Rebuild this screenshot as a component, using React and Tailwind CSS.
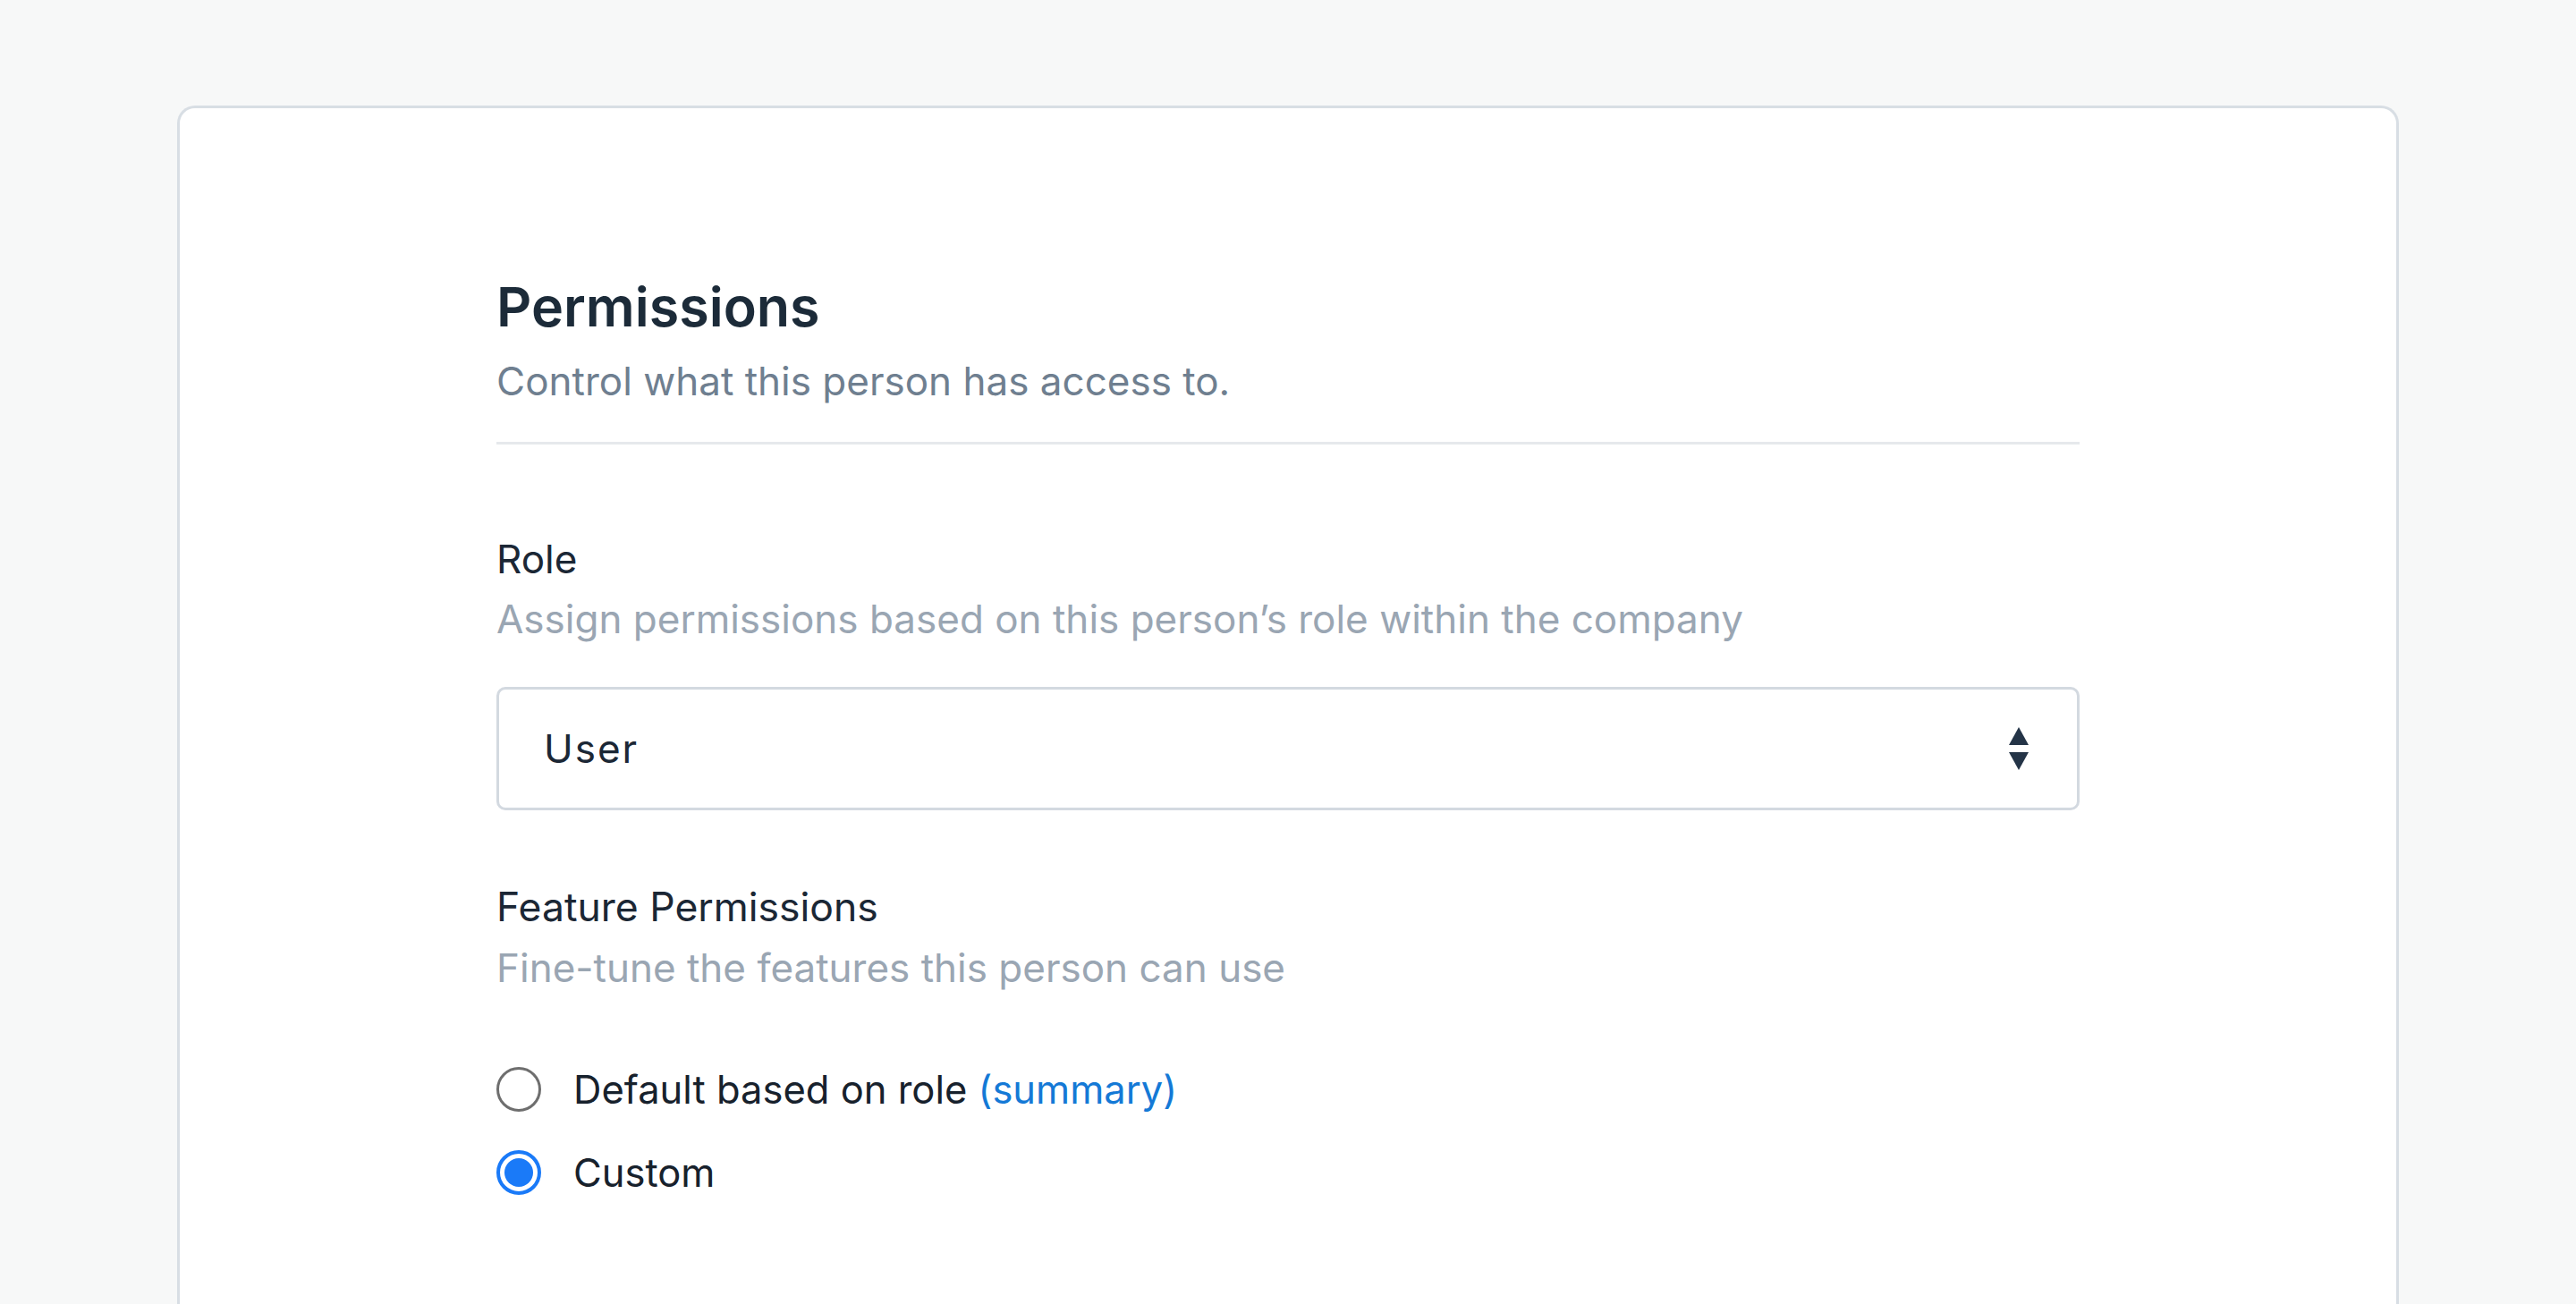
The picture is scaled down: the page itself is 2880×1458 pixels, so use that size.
import React from 'react';

const font = { fontFamily: 'Inter, "Noto Sans", sans-serif' };

const SelectArrows = () => (
  <svg width="26" height="52" viewBox="0 0 26 52" className="shrink-0">
    <path d="M13 2 L24 22 H2 Z" fill="#243447" strokeLinejoin="round" />
    <path d="M2 30 H24 L13 50 Z" fill="#243447" strokeLinejoin="round" />
  </svg>
);

const Radio = ({ checked, children }) => (
  <label className="flex items-center gap-[36px] h-[60px]">
    {checked ? (
      <span className="flex h-[50px] w-[50px] items-center justify-center rounded-full border-[4px] border-[#1a7af8] bg-white">
        <span className="h-[32px] w-[32px] rounded-full bg-[#1a7af8]" />
      </span>
    ) : (
      <span className="h-[50px] w-[50px] rounded-full border-[3px] border-[#6e6e6e] bg-white" />
    )}
    <span className="text-[43.5px] leading-[60px] text-[#17212c]">{children}</span>
  </label>
);

export default function App() {
  return (
    <div className="min-h-screen bg-[#f7f8f8] px-[198px] pt-[118px]" style={font}>
      <div className="h-[1400px] rounded-t-[20px] border-[3px] border-b-0 border-[#d8dee4] bg-white px-[354px] pt-[185px]">
        <h1 className="text-[61px] font-semibold leading-[74px] text-[#1c2b39]">Permissions</h1>
        <p className="mt-[18px] text-[44px] leading-[56px] text-[#6f7f90]">
          Control what this person has access to.
        </p>
        <div className="mt-[40px] h-[3px] bg-[#e6e9ec]" />

        <div className="mt-[100px] text-[44px] leading-[56px] text-[#1b2735]">Role</div>
        <div className="mt-[11px] text-[44px] leading-[56px] text-[#9aa6b3]">
          Assign permissions based on this person’s role within the company
        </div>
        <div className="mt-[48px] flex h-[138px] items-center justify-between rounded-[10px] border-[3px] border-[#d3d9e0] bg-white pl-[50px] pr-[52px]">
          <span className="text-[44px] tracking-[2px] text-[#1b2735]">User</span>
          <SelectArrows />
        </div>

        <div className="mt-[80px] text-[44.5px] leading-[56px] text-[#1b2735]">Feature Permissions</div>
        <div className="mt-[12px] text-[44px] leading-[56px] text-[#9aa6b3]">
          Fine-tune the features this person can use
        </div>

        <div className="mt-[78px] flex flex-col gap-[33px]">
          <Radio>
            Default based on role <span className="text-[#1479d6]">(summary)</span>
          </Radio>
          <Radio checked>Custom</Radio>
        </div>
      </div>
    </div>
  );
}
